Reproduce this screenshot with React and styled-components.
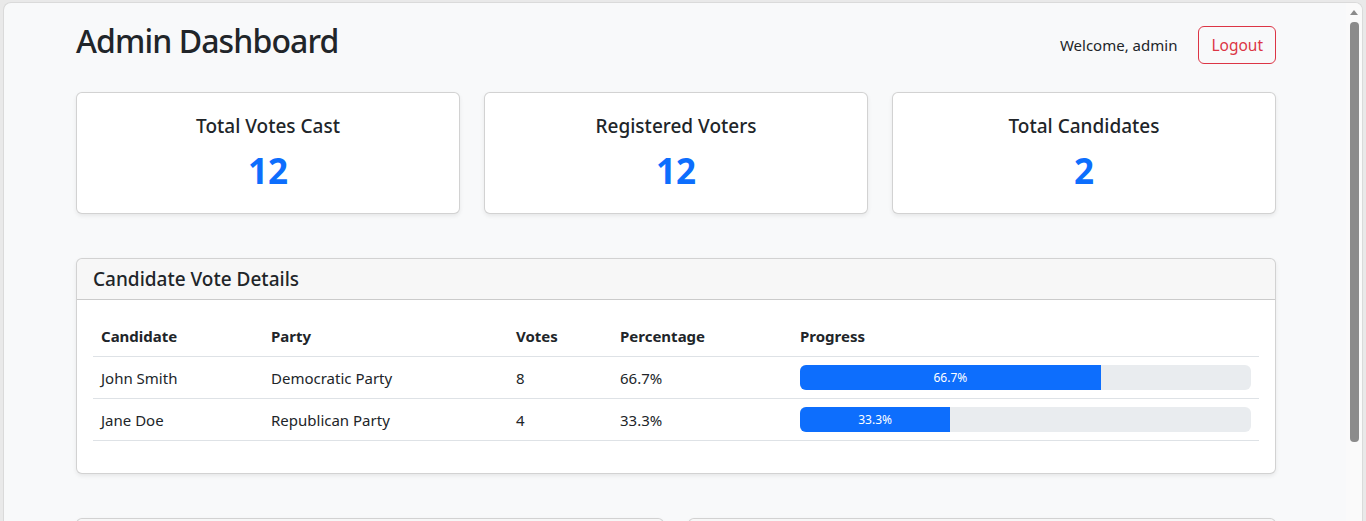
import React from "react";
import styled, { createGlobalStyle } from "styled-components";

const GlobalStyle = createGlobalStyle`
  html, body {
    margin: 0;
    padding: 0;
    background: #e9e9e9;
    overflow: hidden;
  }
  * {
    box-sizing: border-box;
  }
  body {
    font-family: "Noto Sans", "Open Sans", sans-serif;
    color: #212529;
  }
`;

const stats = [
  { label: "Total Votes Cast", value: 12 },
  { label: "Registered Voters", value: 12 },
  { label: "Total Candidates", value: 2 },
];

const candidates = [
  { name: "John Smith", party: "Democratic Party", votes: 8, pct: 66.7 },
  { name: "Jane Doe", party: "Republican Party", votes: 4, pct: 33.3 },
];

function App() {
  return (
    <>
      <GlobalStyle />
      <Frame>
        <Window>
          <Viewport>
            <Container>
              <HeaderRow>
                <PageTitle>Admin Dashboard</PageTitle>
                <UserBox>
                  <Welcome>Welcome, admin</Welcome>
                  <LogoutButton>Logout</LogoutButton>
                </UserBox>
              </HeaderRow>

              <StatsGrid>
                {stats.map((s) => (
                  <StatCard key={s.label}>
                    <StatLabel>{s.label}</StatLabel>
                    <StatValue>{s.value}</StatValue>
                  </StatCard>
                ))}
              </StatsGrid>

              <Card>
                <CardHeader>
                  <CardTitle>Candidate Vote Details</CardTitle>
                </CardHeader>
                <CardBody>
                  <Table>
                    <colgroup>
                      <col style={{ width: 170 }} />
                      <col style={{ width: 245 }} />
                      <col style={{ width: 104 }} />
                      <col style={{ width: 180 }} />
                      <col />
                    </colgroup>
                    <thead>
                      <tr>
                        <Th>Candidate</Th>
                        <Th>Party</Th>
                        <Th>Votes</Th>
                        <Th>Percentage</Th>
                        <Th>Progress</Th>
                      </tr>
                    </thead>
                    <tbody>
                      {candidates.map((c) => (
                        <tr key={c.name}>
                          <Td>{c.name}</Td>
                          <Td>{c.party}</Td>
                          <Td>{c.votes}</Td>
                          <Td>{c.pct}%</Td>
                          <Td>
                            <Progress>
                              <ProgressBar style={{ width: `${c.pct}%` }}>
                                {c.pct}%
                              </ProgressBar>
                            </Progress>
                          </Td>
                        </tr>
                      ))}
                    </tbody>
                  </Table>
                </CardBody>
              </Card>

              {/* next row of panels, only their top edge is in view */}
              <TwoCols>
                <Card>
                  <CardHeader $empty />
                  <CardBody />
                </Card>
                <Card>
                  <CardHeader $empty />
                  <CardBody />
                </Card>
              </TwoCols>
            </Container>
          </Viewport>
          <Scrollbar>
            <ScrollArrow />
            <ScrollThumb />
          </Scrollbar>
        </Window>
      </Frame>
    </>
  );
}

const Frame = styled.div`
  width: 1366px;
  height: 521px;
  padding: 2px 3px 0 3px;
  overflow: hidden;
`;

const Window = styled.div`
  height: 519px;
  display: flex;
  background: #f8f9fa;
  border: 1px solid #dadada;
  border-bottom: none;
  border-radius: 8px 8px 0 0;
  overflow: hidden;
`;

const Viewport = styled.div`
  flex: 1;
  overflow: hidden;
`;

const Container = styled.div`
  width: 1272px;
  padding: 19px 0 0 72px;
  display: flex;
  flex-direction: column;
`;

const HeaderRow = styled.div`
  width: 1200px;
  display: flex;
  justify-content: space-between;
  align-items: center;
  margin-bottom: 24px;
`;

const PageTitle = styled.h1`
  margin: 0 0 8px;
  font-size: 32px;
  font-weight: 500;
  line-height: 1.2;
  letter-spacing: -0.9px;
`;

const UserBox = styled.div`
  display: flex;
  align-items: center;
  gap: 21px;
`;

const Welcome = styled.span`
  font-size: 15px;
  line-height: 24px;
`;

const LogoutButton = styled.button`
  font-family: inherit;
  font-size: 15.5px;
  line-height: 24px;
  color: #dc3545;
  background: transparent;
  border: 1px solid #dc3545;
  border-radius: 6px;
  padding: 6px 12px;
  cursor: pointer;
`;

const StatsGrid = styled.div`
  width: 1200px;
  display: grid;
  grid-template-columns: repeat(3, 1fr);
  gap: 24px;
  margin-bottom: 44px;
`;

const Card = styled.div`
  background: #fff;
  border: 1px solid rgba(0, 0, 0, 0.175);
  border-radius: 6px;
  box-shadow: 0 2px 4px rgba(0, 0, 0, 0.075);
  overflow: hidden;
  width: 100%;
  margin-bottom: 44px;
`;

const StatCard = styled(Card)`
  margin-bottom: 0;
  height: 122px;
  padding: 21px 16px 0;
  text-align: center;
`;

const StatLabel = styled.h5`
  margin: 0 0 11px;
  font-size: 19px;
  font-weight: 500;
  line-height: 24px;
`;

const StatValue = styled.div`
  font-size: 35px;
  font-weight: 700;
  line-height: 43px;
  color: #0d6efd;
`;

const CardHeader = styled.div`
  background: rgba(0, 0, 0, 0.03);
  border-bottom: 1px solid rgba(0, 0, 0, 0.175);
  padding: 8px 16px;
  min-height: ${(p) => (p.$empty ? "41px" : "auto")};
`;

const CardTitle = styled.h5`
  margin: 0;
  font-size: 19px;
  font-weight: 500;
  line-height: 24px;
`;

const CardBody = styled.div`
  padding: 16px;
  min-height: 60px;
`;

const Table = styled.table`
  width: 100%;
  border-collapse: collapse;
  table-layout: fixed;
  margin-bottom: 16px;
  font-size: 15px;
`;

const Th = styled.th`
  text-align: left;
  font-weight: 700;
  padding: 8px;
  line-height: 24px;
  border-bottom: 1px solid #dee2e6;
`;

const Td = styled.td`
  padding: 8px;
  line-height: 24px;
  border-bottom: 1px solid #dee2e6;
  vertical-align: middle;
`;

const Progress = styled.div`
  height: 25px;
  display: flex;
  background: #e9ecef;
  border-radius: 6px;
  overflow: hidden;
`;

const ProgressBar = styled.div`
  display: flex;
  align-items: center;
  justify-content: center;
  background: #0d6efd;
  color: #fff;
  font-size: 12px;
`;

const TwoCols = styled.div`
  width: 1200px;
  display: grid;
  grid-template-columns: 1fr 1fr;
  gap: 24px;
`;

const Scrollbar = styled.div`
  width: 16px;
  background: #fafafa;
  display: flex;
  flex-direction: column;
  align-items: center;
  padding-top: 7px;
`;

const ScrollArrow = styled.div`
  width: 0;
  height: 0;
  border-left: 4.5px solid transparent;
  border-right: 4.5px solid transparent;
  border-bottom: 5px solid #8b8b8b;
`;

const ScrollThumb = styled.div`
  width: 9px;
  height: 420px;
  margin-top: 7px;
  background: #8b8b8b;
  border-radius: 4px;
`;

export default App;
